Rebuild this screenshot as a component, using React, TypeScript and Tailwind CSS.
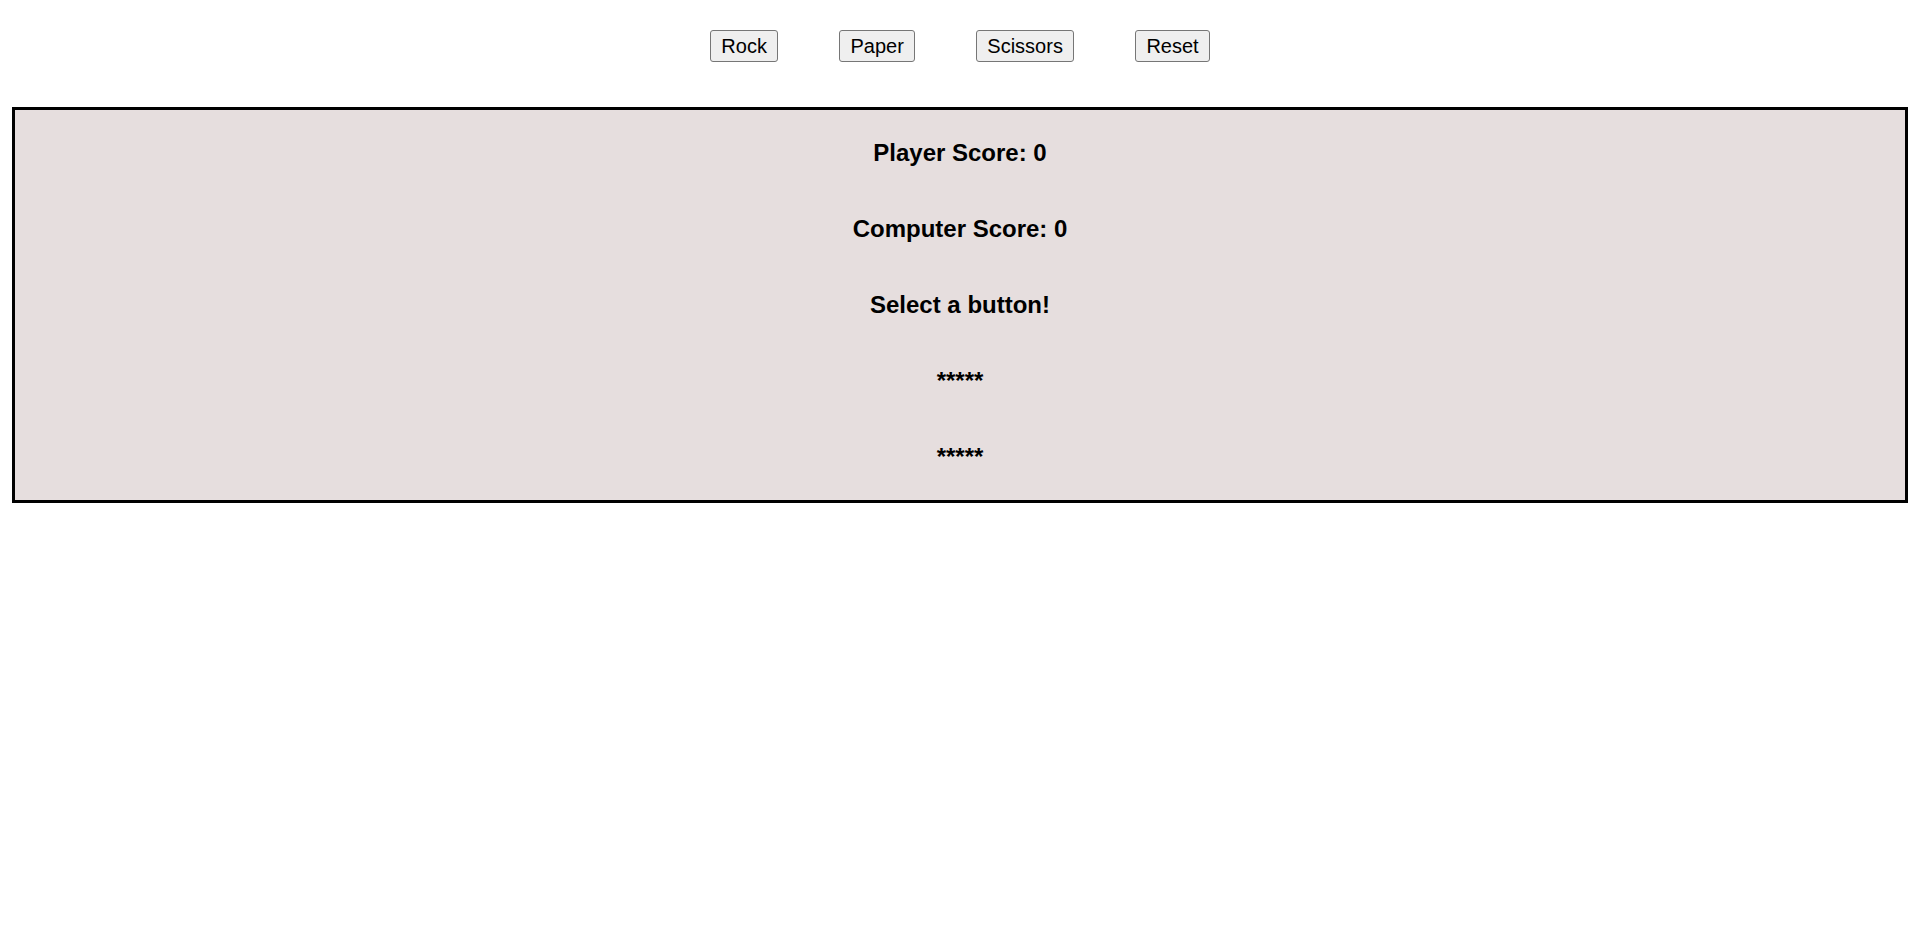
const buttons = ['Rock', 'Paper', 'Scissors', 'Reset']

const lines = ['Player Score: 0', 'Computer Score: 0', 'Select a button!', '*****', '*****']

function App() {
  return (
    <div className="min-h-screen w-full bg-white text-black font-['Liberation_Sans',Arial,sans-serif]">
      <div className="flex justify-center gap-[60.5px] pt-[30px]">
        {buttons.map((b) => (
          <button
            key={b}
            className="px-[10.5px] pt-[4px] pb-[3px] text-[20px] leading-[23px] bg-[#efefef] border border-[#767676] rounded-[3px] text-black"
          >
            {b}
          </button>
        ))}
      </div>
      <div className="mx-[12px] mt-[45px] border-[3px] border-black bg-[#e6dede] pt-[29px] pb-[29px] flex flex-col items-center gap-[48px]">
        {lines.map((l, i) => (
          <h2 key={i} className="text-[24px] leading-[28px] font-bold">
            {l}
          </h2>
        ))}
      </div>
    </div>
  )
}

export default App
